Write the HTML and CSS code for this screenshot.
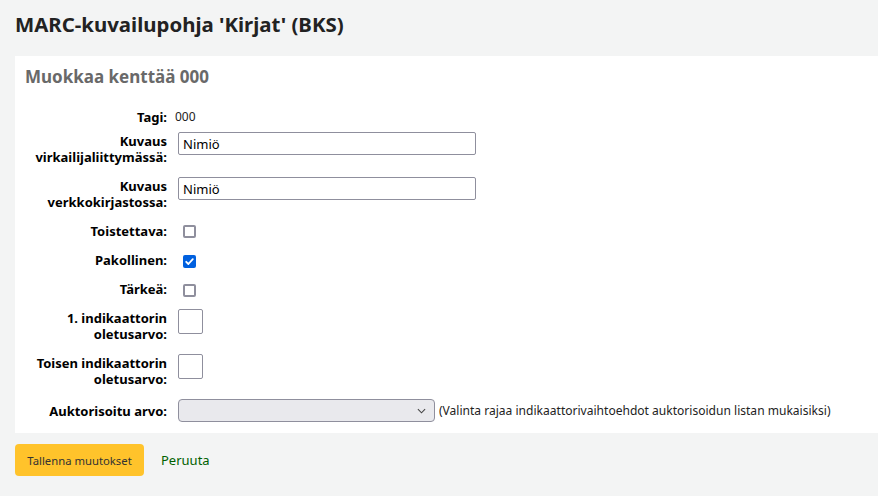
FILE: index.html
```html
<!DOCTYPE html>
<html lang="fi">
<head>
<meta charset="utf-8">
<title>MARC-kuvailupohja</title>
<link rel="stylesheet" href="styles.css">
</head>
<body>
<main class="page">
  <h1 class="title">MARC-kuvailupohja 'Kirjat' (BKS)</h1>
  <form class="panel">
    <h2 class="panel-title">Muokkaa kenttää 000</h2>
    <ol class="rows">
      <li class="row row-tag">
        <span class="label">Tagi:</span>
        <span class="value">000</span>
      </li>
      <li class="row">
        <label class="label">Kuvaus virkailijaliittymässä:</label>
        <input class="text" type="text" value="Nimiö">
      </li>
      <li class="row">
        <label class="label">Kuvaus verkkokirjastossa:</label>
        <input class="text" type="text" value="Nimiö">
      </li>
      <li class="row row-check">
        <label class="label">Toistettava:</label>
        <span class="check"></span>
      </li>
      <li class="row row-check">
        <label class="label">Pakollinen:</label>
        <span class="check checked"><svg viewBox="0 0 13 13" width="13" height="13"><path d="M3.2 6.8 L5.4 9 L9.8 4.2" fill="none" stroke="#fff" stroke-width="1.8" stroke-linecap="round" stroke-linejoin="round"/></svg></span>
      </li>
      <li class="row row-check">
        <label class="label">Tärkeä:</label>
        <span class="check"></span>
      </li>
      <li class="row">
        <label class="label">1. indikaattorin oletusarvo:</label>
        <input class="ind" type="text">
      </li>
      <li class="row">
        <label class="label">Toisen indikaattorin oletusarvo:</label>
        <input class="ind" type="text">
      </li>
      <li class="row row-select">
        <label class="label">Auktorisoitu arvo:</label>
        <span class="select"><svg viewBox="0 0 10 6" width="9" height="6"><path d="M1 1 L5 5 L9 1" fill="none" stroke="#444" stroke-width="1.2"/></svg></span>
        <span class="hint">(Valinta rajaa indikaattorivaihtoehdot auktorisoidun listan mukaisiksi)</span>
      </li>
    </ol>
  </form>
  <div class="actions">
    <button class="btn" type="button">Tallenna muutokset</button>
    <a class="cancel" href="#">Peruuta</a>
  </div>
</main>
</body>
</html>
```
FILE: styles.css
```css
html, body {
  margin: 0;
  padding: 0;
  background: #f3f4f4;
}
body {
  font-family: "Noto Sans", "Open Sans", sans-serif;
  font-size: 13px;
  color: #000;
}
.page {
  padding: 10px 0 0 15px;
}
.title {
  margin: 0;
  font-size: 20.4px;
  line-height: 28px;
  font-weight: 700;
  color: #222;
}
.panel {
  margin-top: 18px;
  background: #fff;
  padding: 10px 0 11px 10px;
}
.panel-title {
  margin: 0;
  font-size: 17px;
  line-height: 22px;
  font-weight: 700;
  color: #696969;
}
.rows {
  list-style: none;
  margin: 20px 0 0 0;
  padding: 0;
  display: flex;
  flex-direction: column;
  gap: 13px;
}
.row {
  display: flex;
  align-items: flex-start;
  gap: 11px;
}
.row-tag {
  align-items: center;
  margin-bottom: -5px;
}
.label {
  width: 142px;
  flex: none;
  text-align: right;
  font-weight: 700;
  line-height: 16px;
}
.value {
  font-size: 12px;
  color: #222;
  margin-left: -3px;
}
.text {
  box-sizing: border-box;
  width: 298px;
  height: 23px;
  margin: -1px 0 0 0;
  padding: 0 4px;
  border: 1px solid #8f8f9d;
  border-radius: 2px;
  font: inherit;
  font-size: 13px;
  color: #000;
}
.row-check {
  align-items: center;
}
.check {
  box-sizing: border-box;
  width: 13px;
  height: 13px;
  margin-left: 5px;
  border: 2px solid #8f8f9d;
  border-radius: 2px;
  display: inline-flex;
}
.row-check + .row-check .check {
  margin-top: 2px;
}
.check.checked {
  background: #0060df;
  border: none;
}
.ind {
  box-sizing: border-box;
  width: 25px;
  height: 25px;
  margin: -1px 0 0 0;
  padding: 0;
  border: 1px solid #8f8f9d;
  border-radius: 2px;
}
.row-select {
  align-items: center;
  margin-top: -1px;
}
.select {
  box-sizing: border-box;
  width: 257px;
  height: 23px;
  background: #e9e9ed;
  border: 1px solid #8f8f9d;
  border-radius: 4px;
  display: flex;
  align-items: center;
  justify-content: flex-end;
  padding-right: 8px;
}
.hint {
  margin-left: -7px;
  font-size: 12.05px;
  color: #222;
}
.actions {
  margin-top: 11px;
  display: flex;
  align-items: center;
  gap: 17px;
}
.btn {
  width: 129px;
  height: 32px;
  background: #ffc32b;
  border: none;
  border-radius: 4px;
  font: inherit;
  font-size: 11.3px;
  color: #333;
  padding: 0;
}
.cancel {
  color: #006100;
  text-decoration: none;
  font-size: 13px;
}
```
